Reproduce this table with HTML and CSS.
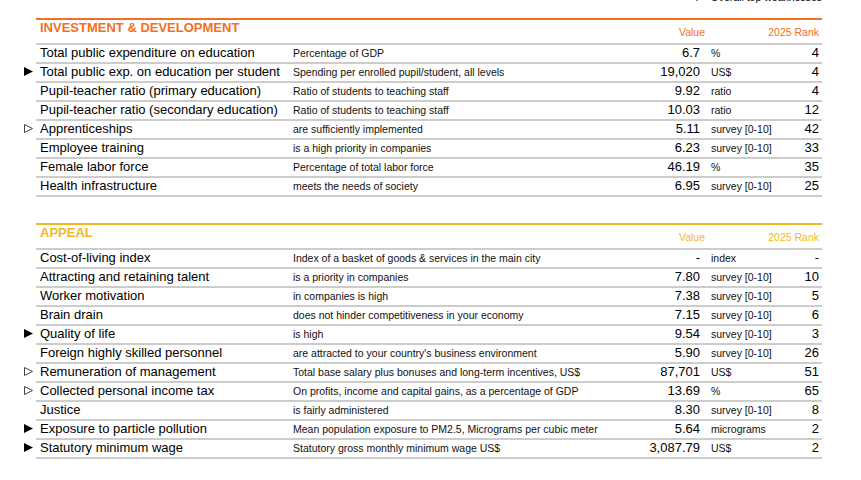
FILE: index.html
```html
<!DOCTYPE html>
<html lang="en">
<head>
<meta charset="utf-8">
<title>Investment &amp; Development / Appeal</title>
<link rel="stylesheet" href="styles.css">
</head>
<body>
<div class="page">
  <div class="legend"><svg class="mark" width="9" height="9" viewBox="0 0 9 9"><polygon points="0.5,0.5 8.5,4.5 0.5,8.5" fill="none" stroke="#444" stroke-width="1"/></svg><span>Overall top weaknesses</span></div>

  <section class="block block-orange">
    <div class="head">
      <div class="title">INVESTMENT &amp; DEVELOPMENT</div>
      <div class="h-value">Value</div>
      <div class="h-rank">2025 Rank</div>
    </div>
    <div class="row"><div class="name">Total public expenditure on education</div><div class="desc">Percentage of GDP</div><div class="val">6.7</div><div class="unit">%</div><div class="rank">4</div></div>
    <div class="row"><div class="name"><svg class="mark" width="9" height="9" viewBox="0 0 9 9"><polygon points="0,0 9,4.5 0,9" fill="#000"/></svg>Total public exp. on education per student</div><div class="desc">Spending per enrolled pupil/student, all levels</div><div class="val">19,020</div><div class="unit">US$</div><div class="rank">4</div></div>
    <div class="row"><div class="name">Pupil-teacher ratio (primary education)</div><div class="desc">Ratio of students to teaching staff</div><div class="val">9.92</div><div class="unit">ratio</div><div class="rank">4</div></div>
    <div class="row"><div class="name">Pupil-teacher ratio (secondary education)</div><div class="desc">Ratio of students to teaching staff</div><div class="val">10.03</div><div class="unit">ratio</div><div class="rank">12</div></div>
    <div class="row"><div class="name"><svg class="mark" width="9" height="9" viewBox="0 0 9 9"><polygon points="0.5,0.5 8.5,4.5 0.5,8.5" fill="none" stroke="#444" stroke-width="1"/></svg>Apprenticeships</div><div class="desc">are sufficiently implemented</div><div class="val">5.11</div><div class="unit">survey [0-10]</div><div class="rank">42</div></div>
    <div class="row"><div class="name">Employee training</div><div class="desc">is a high priority in companies</div><div class="val">6.23</div><div class="unit">survey [0-10]</div><div class="rank">33</div></div>
    <div class="row"><div class="name">Female labor force</div><div class="desc">Percentage of total labor force</div><div class="val">46.19</div><div class="unit">%</div><div class="rank">35</div></div>
    <div class="row"><div class="name">Health infrastructure</div><div class="desc">meets the needs of society</div><div class="val">6.95</div><div class="unit">survey [0-10]</div><div class="rank">25</div></div>
  </section>

  <section class="block block-yellow">
    <div class="head">
      <div class="title">APPEAL</div>
      <div class="h-value">Value</div>
      <div class="h-rank">2025 Rank</div>
    </div>
    <div class="row"><div class="name">Cost-of-living index</div><div class="desc">Index of a basket of goods &amp; services in the main city</div><div class="val">-</div><div class="unit">index</div><div class="rank">-</div></div>
    <div class="row"><div class="name">Attracting and retaining talent</div><div class="desc">is a priority in companies</div><div class="val">7.80</div><div class="unit">survey [0-10]</div><div class="rank">10</div></div>
    <div class="row"><div class="name">Worker motivation</div><div class="desc">in companies is high</div><div class="val">7.38</div><div class="unit">survey [0-10]</div><div class="rank">5</div></div>
    <div class="row"><div class="name">Brain drain</div><div class="desc">does not hinder competitiveness in your economy</div><div class="val">7.15</div><div class="unit">survey [0-10]</div><div class="rank">6</div></div>
    <div class="row"><div class="name"><svg class="mark" width="9" height="9" viewBox="0 0 9 9"><polygon points="0,0 9,4.5 0,9" fill="#000"/></svg>Quality of life</div><div class="desc">is high</div><div class="val">9.54</div><div class="unit">survey [0-10]</div><div class="rank">3</div></div>
    <div class="row"><div class="name">Foreign highly skilled personnel</div><div class="desc">are attracted to your country's business environment</div><div class="val">5.90</div><div class="unit">survey [0-10]</div><div class="rank">26</div></div>
    <div class="row"><div class="name"><svg class="mark" width="9" height="9" viewBox="0 0 9 9"><polygon points="0.5,0.5 8.5,4.5 0.5,8.5" fill="none" stroke="#444" stroke-width="1"/></svg>Remuneration of management</div><div class="desc">Total base salary plus bonuses and long-term incentives, US$</div><div class="val">87,701</div><div class="unit">US$</div><div class="rank">51</div></div>
    <div class="row"><div class="name"><svg class="mark" width="9" height="9" viewBox="0 0 9 9"><polygon points="0.5,0.5 8.5,4.5 0.5,8.5" fill="none" stroke="#444" stroke-width="1"/></svg>Collected personal income tax</div><div class="desc">On profits, income and capital gains, as a percentage of GDP</div><div class="val">13.69</div><div class="unit">%</div><div class="rank">65</div></div>
    <div class="row"><div class="name">Justice</div><div class="desc">is fairly administered</div><div class="val">8.30</div><div class="unit">survey [0-10]</div><div class="rank">8</div></div>
    <div class="row"><div class="name"><svg class="mark" width="9" height="9" viewBox="0 0 9 9"><polygon points="0,0 9,4.5 0,9" fill="#000"/></svg>Exposure to particle pollution</div><div class="desc">Mean population exposure to PM2.5, Micrograms per cubic meter</div><div class="val">5.64</div><div class="unit">micrograms</div><div class="rank">2</div></div>
    <div class="row"><div class="name"><svg class="mark" width="9" height="9" viewBox="0 0 9 9"><polygon points="0,0 9,4.5 0,9" fill="#000"/></svg>Statutory minimum wage</div><div class="desc">Statutory gross monthly minimum wage US$</div><div class="val">3,087.79</div><div class="unit">US$</div><div class="rank">2</div></div>
  </section>
</div>
</body>
</html>
```

FILE: styles.css
```css
html, body {
  margin: 0;
  padding: 0;
  background: #ffffff;
}

body {
  font-family: "Liberation Sans", Arial, sans-serif;
  color: #000;
}

.page {
  display: flow-root;
  width: 786px;
  margin-left: 36px;
}

.legend {
  margin-top: -9px;
  height: 27px;
  display: flex;
  justify-content: flex-end;
  align-items: flex-start;
  font-size: 10.5px;
  line-height: 12px;
  color: #000;
}

.legend .mark {
  margin-right: 6px;
  margin-top: 1px;
}

.block {
  border-top: 2px solid #f36f21;
}

.block-yellow {
  margin-top: 26px;
  border-top-color: #efb91f;
}

.head,
.row {
  display: grid;
  grid-template-columns: 257px 1fr 60px 72px 47px;
  padding-right: 3px;
  border-bottom: 2px solid #cccccc;
}

.head {
  height: 23px;
}

.title {
  grid-column: 1 / 3;
  align-self: start;
  padding-left: 4px;
  font-size: 13px;
  font-weight: bold;
  line-height: 15px;
}

.block-orange .title,
.block-orange .h-value,
.block-orange .h-rank {
  color: #f36f21;
}

.block-yellow .title,
.block-yellow .h-value,
.block-yellow .h-rank {
  color: #efb91f;
}

.h-value,
.h-rank {
  align-self: end;
  font-size: 10.5px;
  line-height: 13px;
  padding-bottom: 4px;
  text-align: right;
  white-space: nowrap;
}

.h-value {
  grid-column: 3;
  margin-right: -5px;
}

.h-rank {
  grid-column: 4 / 6;
}

.row {
  height: 17px;
  align-items: baseline;
}

.name {
  padding-left: 4px;
  font-size: 13px;
  line-height: 16px;
  white-space: nowrap;
}

.mark {
  display: inline-block;
  margin-left: -16px;
  margin-right: 7px;
  vertical-align: 0;
}

.desc {
  font-size: 10.5px;
  line-height: 16px;
  white-space: nowrap;
  color: #111;
}

.val {
  font-size: 13px;
  line-height: 16px;
  text-align: right;
  white-space: nowrap;
}

.unit {
  padding-left: 11px;
  font-size: 10.5px;
  line-height: 16px;
  white-space: nowrap;
  color: #111;
}

.rank {
  font-size: 13px;
  line-height: 16px;
  text-align: right;
}
```
